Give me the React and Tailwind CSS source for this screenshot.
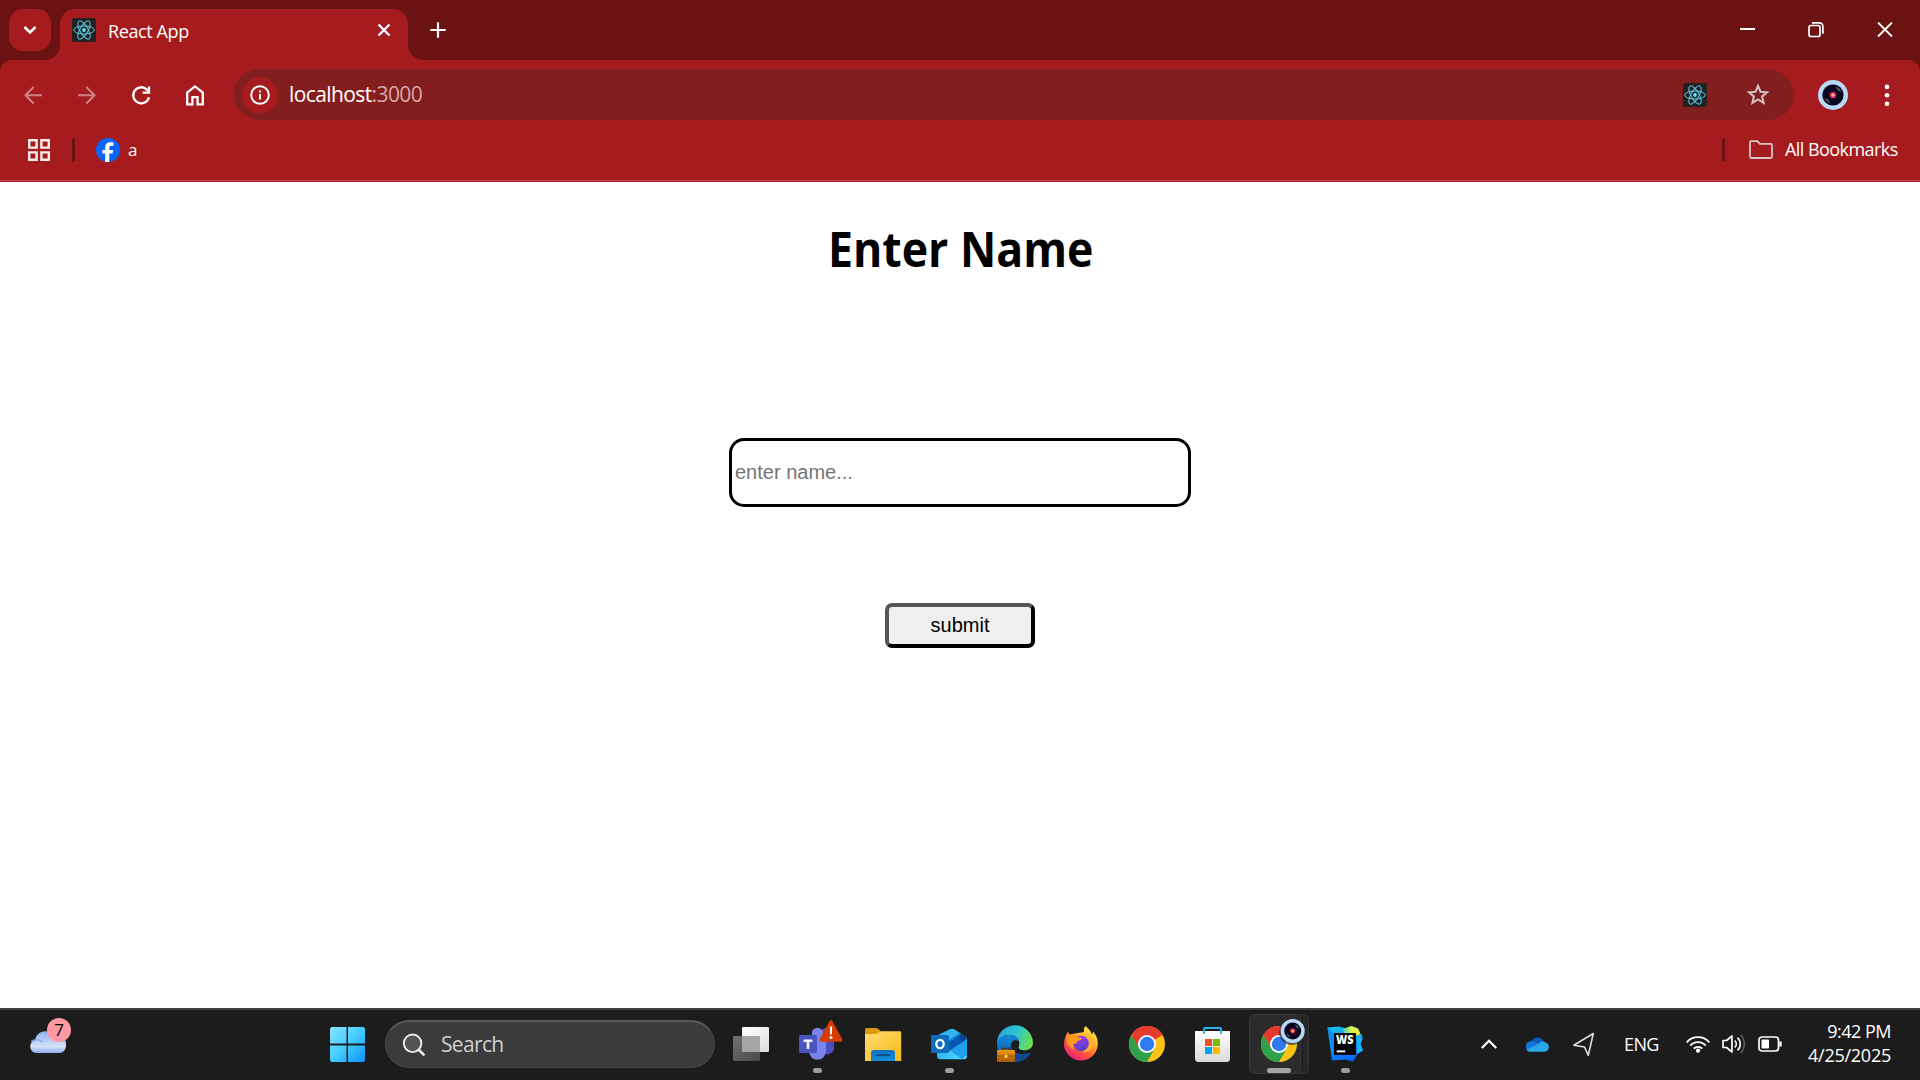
import React from "react";

function ReactLogo() {
  return (
    <svg width="24" height="24" viewBox="0 0 24 24" className="block shrink-0">
      <rect width="24" height="24" rx="2" fill="#222222" />
      <g fill="none" stroke="#5ccbe8" strokeWidth="1">
        <ellipse cx="12" cy="12" rx="10.3" ry="4" />
        <ellipse cx="12" cy="12" rx="10.3" ry="4" transform="rotate(60 12 12)" />
        <ellipse cx="12" cy="12" rx="10.3" ry="4" transform="rotate(120 12 12)" />
      </g>
      <circle cx="12" cy="12" r="1.9" fill="#61dafb" />
    </svg>
  );
}

function AvatarShapes() {
  return (
    <g>
      <circle cx="15" cy="15" r="15" fill="#b7d9f8" />
      <circle cx="15" cy="15" r="10.6" fill="#08061a" />
      <path d="M17.5 6.5 A9 9 0 0 1 23.5 12 L19.5 10.5 Z" fill="#8d90a0" opacity=".6" />
      <path d="M12.5 23.5 A9 9 0 0 1 6.5 18 L10.5 19.5 Z" fill="#8d90a0" opacity=".5" />
      <circle cx="15" cy="15" r="5.2" fill="#170a30" />
      <circle cx="15" cy="15" r="3.1" fill="#e8315f" />
      <circle cx="15" cy="15" r="1.5" fill="#ffc36b" />
    </g>
  );
}

function TabStrip() {
  return (
    <div className="flex h-[60px] bg-[#6b1212] pl-[9px] pt-[9px]">
      <div className="flex h-[42px] w-[42px] items-center justify-center rounded-[14px] bg-[#a61c1e]">
        <svg width="14" height="10" viewBox="0 0 14 10" fill="none" stroke="#fff" strokeWidth="2.5">
          <path d="M1.5 2 7 7.5 12.5 2" />
        </svg>
      </div>
      <div className="relative ml-[9px] flex h-[51px] w-[348px] rounded-t-[15px] bg-[#a61c1e] pl-3">
        <svg className="absolute -left-[15px] bottom-0" width="15" height="15">
          <path d="M15 0V15H0A15 15 0 0 0 15 0Z" fill="#a61c1e" />
        </svg>
        <svg className="absolute -right-[15px] bottom-0" width="15" height="15">
          <path d="M0 0V15H15A15 15 0 0 1 0 0Z" fill="#a61c1e" />
        </svg>
        <div className="mt-[9px] h-6">
          <ReactLogo />
        </div>
        <span className="ml-3 mt-[10px] text-[18px] leading-6 tracking-[-0.4px] text-white">React App</span>
        <svg className="ml-auto mr-[17px] mt-[14px]" width="14" height="14" viewBox="0 0 14 14" stroke="#fff" strokeWidth="2.4">
          <path d="M1.5 1.5 12.5 12.5M12.5 1.5 1.5 12.5" />
        </svg>
      </div>
      <svg className="ml-[22px] mt-[13px]" width="16" height="16" viewBox="0 0 16 16" stroke="#fff" strokeWidth="2.2">
        <path d="M8 0.3V15.7M0.3 8H15.7" />
      </svg>
      <div className="ml-auto mr-[27px] mt-[13px] flex h-4 gap-[53px]">
        <svg width="16" height="16" viewBox="0 0 16 16">
          <rect x="1" y="6" width="15" height="2" fill="#fff" />
        </svg>
        <svg width="16" height="16" viewBox="0 0 16 16" fill="none" stroke="#fff" strokeWidth="1.7">
          <rect x="1" y="3.500" width="11" height="11" rx="2" />
          <path d="M4 0.900H11.3A3.6 3.6 0 0 1 14.9 4.5V11.700" />
        </svg>
        <svg width="16" height="16" viewBox="0 0 16 16" stroke="#fff" strokeWidth="1.8">
          <path d="M1 .5 15 14.500M15 .5 1 14.500" />
        </svg>
      </div>
    </div>
  );
}

function Toolbar() {
  return (
    <div className="bg-[#6b1212]">
      <div className="flex h-[69px] items-center rounded-t-[12px] bg-[#a61c1e] pl-[21px]">
        <div className="flex gap-[30px]">
          <svg width="24" height="24" viewBox="0 0 24 24" fill="none" stroke="#d08082" strokeWidth="2.1">
            <path d="M21 12.3H5M12.6 4 4.5 12.3 12.6 20.5" />
          </svg>
          <svg width="24" height="24" viewBox="0 0 24 24" fill="none" stroke="#d08082" strokeWidth="2.1">
            <path d="M3 12.3H19M11.4 4 19.5 12.3 11.4 20.5" />
          </svg>
          <svg width="24" height="24" viewBox="0 0 24 24" fill="none" stroke="#fff" strokeWidth="2.3">
            <path d="M20 14.2A8 8 0 1 1 17.8 6.5L20 8.8" />
            <path d="M20 3.5V9.6H13.6" />
          </svg>
          <svg width="24" height="24" viewBox="0 0 24 24" fill="none" stroke="#fff" strokeWidth="2.3">
            <path d="M4.2 21.3V9.5L12 3.4 19.8 9.5V21.3H14.6V14.2H9.4V21.3Z" />
          </svg>
        </div>
        <div className="ml-[27px] flex h-[51px] w-[1560px] items-center rounded-full bg-[#831e1e] pl-[8px] pr-[24px]">
          <div className="flex h-9 w-9 items-center justify-center rounded-full bg-[#a61c1e]">
            <svg width="20" height="20" viewBox="0 0 20 20" fill="none" stroke="#fff" strokeWidth="1.9">
              <circle cx="10" cy="10" r="8.8" />
              <path d="M10 9V14.6M10 5.4V7.5" />
            </svg>
          </div>
          <span className="-mt-[2px] ml-[11px] text-[21px] leading-7 tracking-[-0.6px] text-white">
            localhost<span className="text-[#d9a7a8]">:3000</span>
          </span>
          <div className="ml-auto mr-[39px]">
            <ReactLogo />
          </div>
          <svg width="24" height="24" viewBox="0 0 24 24" fill="none" stroke="#d3c3c3" strokeWidth="2">
            <path d="M12 2.800 14.500 8.700 21 9.200 16.100 13.400 17.600 19.900 12 16.400 6.400 19.900 7.900 13.400 3 9.200 9.500 8.700Z" />
          </svg>
        </div>
        <svg className="ml-6" width="30" height="30" viewBox="0 0 30 30">
          <AvatarShapes />
        </svg>
        <svg className="ml-[36px]" width="6" height="24" viewBox="0 0 6 24" fill="#fff">
          <circle cx="3" cy="3.9" r="2.3" />
          <circle cx="3" cy="12.3" r="2.3" />
          <circle cx="3" cy="20.7" r="2.3" />
        </svg>
      </div>
    </div>
  );
}

function BookmarksBar() {
  return (
    <div className="flex h-[53px] items-center border-b border-[#a61c1e] bg-[#a61c1e]">
      <div className="flex h-[52px] w-full items-center border-b border-[#bf5456] pb-[9px]">
        <svg className="ml-[28px]" width="22" height="22" viewBox="0 0 22 22" fill="none" stroke="#f7eded" strokeWidth="2.4">
          <path d="M1.2 1.2H8.6V8.6H1.2ZM13.4 1.2H20.8V8.6H13.4ZM1.2 13.4H8.6V20.8H1.2ZM13.4 13.4H20.8V20.8H13.4Z" />
        </svg>
        <div className="ml-[22px] h-6 w-[3px] rounded-full bg-[#6b1212]" />
        <svg className="ml-[21px]" width="24" height="24" viewBox="0 0 24 24">
          <circle cx="12" cy="12" r="12" fill="#0866ff" />
          <path d="M9.2 24V15.6H6.4V11.9H9.2V9.8C9.2 6 11 4.3 14.6 4.3 15.6 4.3 16.8 4.4 17.5 4.6V7.9C17 7.8 16.2 7.8 15.6 7.8 13.8 7.8 13.3 8.5 13.3 10V11.9H17.2L16.6 15.6H13.3V24Z" fill="#fff" />
        </svg>
        <span className="-mt-px ml-[8px] text-[17px] leading-6 text-white">a</span>
        <div className="ml-auto h-6 w-[3px] rounded-full bg-[#6b1212]" />
        <svg className="ml-[24px]" width="24" height="20" viewBox="0 0 24 20" fill="none" stroke="#d6c6c6" strokeWidth="1.8">
          <path d="M2.4 1.2H8.3L11 3.9H21.6A1.4 1.4 0 0 1 23 5.3V16.6A1.4 1.4 0 0 1 21.6 18H2.4A1.4 1.4 0 0 1 1 16.6V2.6A1.4 1.4 0 0 1 2.4 1.2Z" />
        </svg>
        <span className="-mt-[2px] ml-3 mr-[21px] w-[114px] whitespace-nowrap text-[18px] leading-6 tracking-[-0.55px] text-white">
          All Bookmarks
        </span>
      </div>
    </div>
  );
}

function Page() {
  return (
    <main className="flex h-[826px] flex-col items-center bg-white">
      <h1 className="mt-[34px] origin-center scale-x-[0.93] whitespace-nowrap pl-px text-[48px] font-bold leading-[66px] text-black">
        Enter Name
      </h1>
      <input
        type="text"
        placeholder="enter name..."
        className="mt-[156px] h-[69px] w-[462px] rounded-[15px] border-[3px] border-black bg-white px-[3px] font-['Liberation_Sans',sans-serif] text-[20px] text-black placeholder:text-[#757575] placeholder:opacity-100"
      />
      <button className="mt-[96px] h-[45px] w-[150px] rounded-[7px] border-4 border-b-black border-l-[#555] border-r-black border-t-[#555] bg-[#efefef] pb-px font-['Liberation_Sans',sans-serif] text-[20px] leading-[23px] text-black">
        submit
      </button>
    </main>
  );
}

function Cell({ children, dot }) {
  return (
    <svg width="66" height="70" viewBox="0 2 66 70" className="block shrink-0">
      {children}
      {dot && <rect x="29" y="60" width="9" height="5" rx="2.5" fill="#9d9d9d" />}
    </svg>
  );
}

function ChromeShapes() {
  return (
    <g>
      <circle cx="33" cy="36" r="18" fill="#fbc116" />
      <path d="M33 36 17.4 27A18 18 0 0 1 48.6 27Z" fill="#e33b2e" />
      <path d="M33 27H48.6A18 18 0 0 0 17.4 27L25.2 40.5Z" fill="#e33b2e" />
      <path d="M17.4 27A18 18 0 0 0 33 54L40.8 40.5 33 45 25.2 40.5Z" fill="#2da14c" />
      <circle cx="33" cy="36" r="9" fill="#fff" />
      <circle cx="33" cy="36" r="7.2" fill="#2f7bee" />
    </g>
  );
}

function TaskView() {
  return (
    <Cell>
      <defs>
        <linearGradient id="tvw" x1="0" y1="0" x2="1" y2="1">
          <stop offset="0" stopColor="#fff" />
          <stop offset="1" stopColor="#dcdcdc" />
        </linearGradient>
        <linearGradient id="tvg" x1="0" y1="0" x2="1" y2="1">
          <stop offset="0" stopColor="#707070" />
          <stop offset="1" stopColor="#4a4a4a" />
        </linearGradient>
      </defs>
      <rect x="15" y="28" width="27" height="25" rx="1.2" fill="url(#tvg)" />
      <rect x="24" y="19" width="27" height="25" rx="1.2" fill="url(#tvw)" />
      <rect x="24" y="28" width="18" height="16" fill="#a5a5a5" />
    </Cell>
  );
}

function Teams() {
  return (
    <Cell dot>
      <circle cx="42" cy="25" r="5" fill="#4f52bd" />
      <path d="M38 30H50V41A6.5 6.5 0 0 1 38 43Z" fill="#4a4fc0" />
      <circle cx="33.5" cy="25.3" r="5.6" fill="#7b83eb" />
      <path d="M25 30H42V43A8.5 8.7 0 0 1 25 43Z" fill="#7b83eb" />
      <rect x="15" y="27" width="18" height="18" rx="1.5" fill="#4b53bc" />
      <path d="M19.6 31.5H28.4V33.9H25.3V41H22.7V33.9H19.6Z" fill="#f2f2ff" />
      <path d="M45.4 13.5Q47 10.8 48.6 13.5L58.2 31Q59 33.8 56.5 33.8H37.5Q35 33.8 35.8 31Z" fill="#d83b01" />
      <path d="M45.8 18.5H48.2L47.9 26.6H46.1Z" fill="#fff" />
      <circle cx="47" cy="29.6" r="1.5" fill="#fff" />
    </Cell>
  );
}

function Explorer() {
  return (
    <Cell>
      <defs>
        <linearGradient id="exy" x1="0" y1="0" x2="1" y2="1">
          <stop offset="0" stopColor="#ffdc73" />
          <stop offset="1" stopColor="#f9b916" />
        </linearGradient>
        <linearGradient id="exb" x1="0" y1="0" x2="0" y2="1">
          <stop offset="0" stopColor="#0c70c0" />
          <stop offset="1" stopColor="#138fdf" />
        </linearGradient>
      </defs>
      <path d="M15 22V21.5A1.5 1.5 0 0 1 16.5 20H26Q27.5 20 29 21.5L31 23.5 27 29H15Z" fill="#dc9a08" />
      <path d="M15 26H25.5Q27 26 28.5 24.6 30 23.2 31.5 23.2H50A1.2 1.2 0 0 1 51.2 24.4V53H15Z" fill="url(#exy)" />
      <path d="M21 53V45A3 3 0 0 1 24 42H42A3 3 0 0 1 45 45V53Z" fill="url(#exb)" />
      <rect x="25.5" y="46.3" width="14.5" height="1.7" rx=".8" fill="#064a86" />
    </Cell>
  );
}

function Outlook() {
  return (
    <Cell dot>
      <defs>
        <linearGradient id="olb" x1="0" y1="0" x2="1" y2="0">
          <stop offset="0" stopColor="#2fb6f2" />
          <stop offset="1" stopColor="#52dcff" />
        </linearGradient>
      </defs>
      <path d="M21 29Q21 27.500 22.500 26.500L34 21.300Q36 20.300 38 21.300L49.500 28.500Q51 29.500 51 31V40H21Z" fill="#1387d6" />
      <path d="M23 27 34 21.300Q36 20.300 38 21.300L43.500 24.700 30 34Z" fill="#32b4ee" />
      <path d="M33 34.500 45.500 25.900 49.500 28.500Q51 29.800 50 31.200L36 41 33 42Z" fill="#0b3f95" />
      <path d="M33 34.500 42.500 28 46.500 33.500 33 42Z" fill="#0a56b4" />
      <path d="M51 31.500V48A3.500 3.500 0 0 1 49.500 51L32 43Z" fill="#1b93e4" />
      <path d="M21 41 33 43.500 51 36V48A3.500 3.500 0 0 1 47.500 51.300H24.500A3.500 3.500 0 0 1 21 48Z" fill="url(#olb)" />
      <path d="M51 31.500V47L46 51.300 34.500 42.800Z" fill="#209fec" />
      <rect x="15" y="27" width="18" height="18" rx="1.5" fill="#0f6cbd" />
      <ellipse cx="24" cy="36" rx="3.7" ry="4.2" fill="none" stroke="#fff" strokeWidth="2.2" />
    </Cell>
  );
}

function Edge() {
  return (
    <Cell>
      <defs>
        <linearGradient id="edg" x1="0" y1="0.3" x2="1" y2="0.6">
          <stop offset="0" stopColor="#2aa5e0" />
          <stop offset=".5" stopColor="#2cc4cf" />
          <stop offset="1" stopColor="#6fe04a" />
        </linearGradient>
        <linearGradient id="edb" x1="0" y1="0" x2="0" y2="1">
          <stop offset="0" stopColor="#1688dc" />
          <stop offset="1" stopColor="#0c59a4" />
        </linearGradient>
        <linearGradient id="edc" x1="0" y1="0" x2="0" y2="1">
          <stop offset="0" stopColor="#ee9a12" />
          <stop offset="1" stopColor="#a85606" />
        </linearGradient>
      </defs>
      <path d="M15 36A18 18 0 0 1 51 34.500C51 40 47 42.300 42 42.300 38 42.300 35.500 41 37 38 38.500 32 34.500 27.500 29 27 22 26.500 16 30 15 36Z" fill="url(#edg)" />
      <path d="M15 36C15 30 22 26.500 29 27 34 27.400 37 30.500 37 33.500 36 31.500 31 31 29.500 35 27.500 40.500 32 45.500 38 46 42 46.300 45 45.500 48.500 44.800 45 51.500 39 54 33 54 23 54 15 46 15 36Z" fill="url(#edb)" />
      <path d="M28.800 37.500C28.500 42.500 33 46 38 46.200 42 46.300 45 45.500 48.500 44.800 45 51.500 39 54 34 54 28 51 25 43 28.800 37.500Z" fill="#114a90" />
      <path d="M20.500 42.500V40.500H27V42.500" fill="none" stroke="#5f3208" strokeWidth="1.300" />
      <rect x="15" y="42" width="18" height="12" rx="1" fill="url(#edc)" />
      <path d="M15 48H33" stroke="#9a5006" strokeWidth="1" />
      <rect x="22.700" y="46.800" width="2.600" height="3" fill="#ffe14a" />
    </Cell>
  );
}

function Firefox() {
  return (
    <Cell>
      <defs>
        <linearGradient id="ffo" x1="0.85" y1="0" x2="0.2" y2="1">
          <stop offset="0" stopColor="#fff24a" />
          <stop offset=".35" stopColor="#ffb32d" />
          <stop offset=".65" stopColor="#ff5a36" />
          <stop offset="1" stopColor="#e31587" />
        </linearGradient>
        <linearGradient id="ffp" x1="0" y1="0" x2="0.300" y2="1">
          <stop offset="0" stopColor="#a23cf0" />
          <stop offset="1" stopColor="#5b3fc4" />
        </linearGradient>
      </defs>
      <path d="M37.500 18C40 20 43 23 44 26.500 44.700 26 45 24.800 44.800 23.600 48.500 27 50 32 49.800 37A17 17 0 0 1 16 37.500C16 32.500 17 28 20 23.500 20.500 24.800 20.800 25.800 21.500 26.500L24 26 36 24C35.500 21.500 36 19.500 37.500 18Z" fill="url(#ffo)" />
      <circle cx="33" cy="35.500" r="7.800" fill="url(#ffp)" />
      <path d="M18.500 29.500C22 26.500 26 26.500 29 28.800L34 30.300C33.500 32.500 30 32.300 29 33.800 28.500 36 26.500 35.500 25 36.500L26.500 42C21 40 18 35 18.500 29.500Z" fill="#ff9a22" />
      <path d="M34 27.500C38 27 41.500 30.500 41.300 35.500 41 39.500 38 43 33.500 43.500 40 45.500 46 40.500 45.500 33.500 44.500 29 39 24.500 34 27.500Z" fill="#ffb22f" />
    </Cell>
  );
}

function Store() {
  return (
    <Cell>
      <defs>
        <linearGradient id="stw" x1="0" y1="0" x2="0" y2="1">
          <stop offset="0" stopColor="#fff" />
          <stop offset="1" stopColor="#d9d9d9" />
        </linearGradient>
      </defs>
      <path d="M15 23H50V50.500A3.500 3.500 0 0 1 46.500 54H18.500A3.500 3.500 0 0 1 15 50.500Z" fill="url(#stw)" />
      <path d="M24 26V20.800A1.800 1.800 0 0 1 24.900 20H40.100A1.800 1.800 0 0 1 41 20.800V26" fill="none" stroke="#28aee8" strokeWidth="1.900" />
      <rect x="25" y="31" width="7" height="7" fill="#f25022" />
      <rect x="33" y="31" width="7" height="7" fill="#7fba00" />
      <rect x="25" y="39" width="7" height="7" fill="#00a4ef" />
      <rect x="33" y="39" width="7" height="7" fill="#ffb900" />
    </Cell>
  );
}

function ActiveChrome() {
  return (
    <Cell>
      <rect x="9.500" y="6.500" width="53" height="59" rx="5" fill="#282828" stroke="#343434" />
      <rect x="3" y="6" width="54" height="60" rx="6" fill="#1c1c1c" />
      <rect x="3.500" y="6.500" width="51.500" height="59" rx="5" fill="#2b2b2b" stroke="#393939" />
      <ChromeShapes />
      <circle cx="45.500" cy="24.500" r="12.500" fill="#1f3550" opacity=".7" />
      <g transform="translate(34.700 11) scale(.8)">
        <AvatarShapes />
      </g>
      <rect x="21" y="60" width="24" height="5" rx="2.500" fill="#a5a4a0" />
    </Cell>
  );
}

function WebStorm() {
  return (
    <Cell dot>
      <defs>
        <linearGradient id="wsb" x1="0" y1="0" x2="0.300" y2="1">
          <stop offset="0" stopColor="#18c5e8" />
          <stop offset="1" stopColor="#0a6cff" />
        </linearGradient>
        <linearGradient id="wsy" x1="0" y1="0.500" x2="1" y2="0.500">
          <stop offset="0" stopColor="#3cd0c0" />
          <stop offset=".5" stopColor="#e4ee46" />
          <stop offset="1" stopColor="#f0ee3c" />
        </linearGradient>
      </defs>
      <path d="M15.500 19.500 27 18.500 33.500 20.500 40 18 46 20.500 50.500 31 48.500 36 51 42.500 45.500 46 41 53.500 33 51.500 20 52.500Z" fill="url(#wsb)" />
      <path d="M31 21 39 18 46 20.500 48.500 26 44.500 28 42 25H32Z" fill="url(#wsy)" />
      <path d="M45 27.500 49.500 26 50.500 30 48.500 36 51 42.500 45 46Z" fill="#12b4f6" />
      <path d="M15.500 19.500 24 28 21 44Z" fill="#1187f5" />
      <rect x="22" y="25" width="22" height="22" fill="#050505" />
      <text
        x="24"
        y="35.800"
        fontSize="12"
        fontWeight="800"
        fill="#fff"
        textLength="17.500"
        lengthAdjust="spacingAndGlyphs"
        fontFamily="Open Sans, sans-serif"
      >
        WS
      </text>
      <rect x="24.700" y="42.400" width="8.500" height="1.900" fill="#fff" />
    </Cell>
  );
}

function Tray() {
  return (
    <div className="ml-auto flex h-full items-center pb-[2px] text-white">
      <svg width="16" height="10" viewBox="0 0 16 10" fill="none" stroke="#fff" strokeWidth="2.200">
        <path d="M.8 9 8 1.800 15.200 9" />
      </svg>
      <svg className="ml-[28px]" width="24" height="16" viewBox="0 0 24 16">
        <path d="M6.500 6A6.500 6.500 0 0 1 18.500 5L17 11H5Z" fill="#0a5db8" />
        <path d="M5.500 5.200C8.500 4.500 10.500 6 15 9L9 15.500H5.200A5.200 5.200 0 0 1 5.500 5.200Z" fill="#0f78d4" />
        <path d="M14 7.500C16 5.200 19 5 20.500 6.500 23 7 24 9.300 24 11A4.700 4.700 0 0 1 19.500 15.700H5C3.200 15.700 2.200 15 1.500 13.800Z" fill="#28a8ea" />
      </svg>
      <svg className="ml-[23px]" width="23" height="25" viewBox="0 0 23 25" fill="none" stroke="#ddd" strokeWidth="1.600" strokeLinejoin="round">
        <path d="M21.300 1.500 1.800 13.200 12.500 15 16.300 23.300Z" />
      </svg>
      <span className="ml-[29px] w-[36px] whitespace-nowrap text-[18px] leading-6 tracking-[-0.6px]">ENG</span>
      <svg className="ml-[26px]" width="24" height="18" viewBox="0 0 24 18" fill="none" stroke="#fff" strokeWidth="1.800">
        <path d="M.7 7.300A15 15 0 0 1 23.300 7.300M4.300 10.600A10.300 10.300 0 0 1 19.700 10.600M7.700 13.700A5.800 5.800 0 0 1 16.300 13.700" />
        <circle cx="12" cy="15.700" r="2.100" fill="#fff" stroke="none" />
      </svg>
      <svg className="ml-[12px]" width="24" height="20" viewBox="0 0 24 20" fill="none" stroke="#fff" strokeWidth="1.700">
        <path d="M1 6.500H4.500L10 2V18L4.500 13.500H1Z" strokeLinejoin="round" />
        <path d="M12.800 6.500A5 5 0 0 1 12.800 13.500M15.600 3.600A9 9 0 0 1 15.600 16.400" />
        <path d="M18.700 1A13 13 0 0 1 18.700 19" stroke="#5a5a5a" />
      </svg>
      <svg className="ml-[12px]" width="24" height="16" viewBox="0 0 24 16" fill="none" stroke="#fff" strokeWidth="1.700">
        <rect x="1" y="1" width="19.500" height="14" rx="3" />
        <rect x="3.500" y="3.500" width="7.500" height="9" rx="1" fill="#fff" stroke="none" />
        <path d="M22.500 5.500V10.500" strokeWidth="2.400" />
      </svg>
      <div className="ml-[24px] mr-[29px] flex w-[85px] flex-col items-end whitespace-nowrap pb-[2px] text-[18px] leading-6">
        <span className="tracking-[-0.5px]">9:42 PM</span>
        <span className="tracking-[-0.25px]">4/25/2025</span>
      </div>
    </div>
  );
}

function Taskbar() {
  return (
    <footer className="flex h-[72px] items-start border-t-2 border-[#3f3f3f] bg-[#1c1c1c]">
      <div className="relative ml-[29px] h-[70px] w-[42px]">
        <svg width="42" height="70" viewBox="0 2 42 70" className="block">
          <defs>
            <linearGradient id="cld" x1="0" y1="0" x2="0" y2="1">
              <stop offset="0" stopColor="#8fb0ec" />
              <stop offset=".7" stopColor="#d5e2f8" />
              <stop offset="1" stopColor="#8aabec" />
            </linearGradient>
          </defs>
          <path d="M7 45A6.500 6.500 0 0 1 6 32.300 10 10 0 0 1 25 29 8 8 0 0 1 37 36V38A7 7 0 0 1 31 45Z" fill="url(#cld)" />
          <path d="M2 33.500C6 30.800 11 31.500 14 34" fill="none" stroke="#86a8e6" strokeWidth="1.300" />
        </svg>
        <span className="absolute left-[18px] top-[8px] flex h-6 w-6 items-center justify-center rounded-full bg-[#ff99a4] pb-px text-[17px] leading-6 text-black">
          7
        </span>
      </div>
      <svg className="ml-[259px]" width="35" height="70" viewBox="0 2 35 70">
        <defs>
          <linearGradient id="win" gradientUnits="userSpaceOnUse" x1="0" y1="19" x2="35" y2="54">
            <stop offset="0" stopColor="#8be3ff" />
            <stop offset=".5" stopColor="#44ccff" />
            <stop offset="1" stopColor="#0a93ff" />
          </linearGradient>
        </defs>
        <path d="M1.500 19H16.500V35.500H0V20.500ZM18 19H33.500L35 20.500V35.500H18ZM0 37.500H16.500V54H1.500L0 52.500ZM18 37.500H35V52.500L33.500 54H18Z" fill="url(#win)" />
      </svg>
      <div className="ml-[20px] mt-[10px] flex h-[48px] w-[330px] items-center rounded-full border border-t-2 border-[#474747] border-t-[#5a5a5a] bg-[#3b3b3b] pl-[16px]">
        <svg width="24" height="24" viewBox="0 0 24 24" fill="none" stroke="#e8eaec" strokeLinecap="round">
          <circle cx="10.600" cy="10.300" r="8.800" fill="#545454" strokeWidth="1.900" />
          <path d="M17 17 21.700 21.700" strokeWidth="2.600" />
        </svg>
        <span className="-mt-px ml-[15px] text-[21px] leading-7 tracking-[-0.65px] text-[#cfcfcf]">Search</span>
      </div>
      <div className="ml-[3px] flex">
        <TaskView />
        <Teams />
        <Explorer />
        <Outlook />
        <Edge />
        <Firefox />
        <Cell>
          <ChromeShapes />
        </Cell>
        <Store />
        <ActiveChrome />
        <WebStorm />
      </div>
      <Tray />
    </footer>
  );
}

export default function App() {
  return (
    <div className="flex h-[1080px] w-[1920px] flex-col overflow-hidden bg-white font-['Open_Sans','Noto_Sans',sans-serif]">
      <TabStrip />
      <Toolbar />
      <BookmarksBar />
      <Page />
      <Taskbar />
    </div>
  );
}
